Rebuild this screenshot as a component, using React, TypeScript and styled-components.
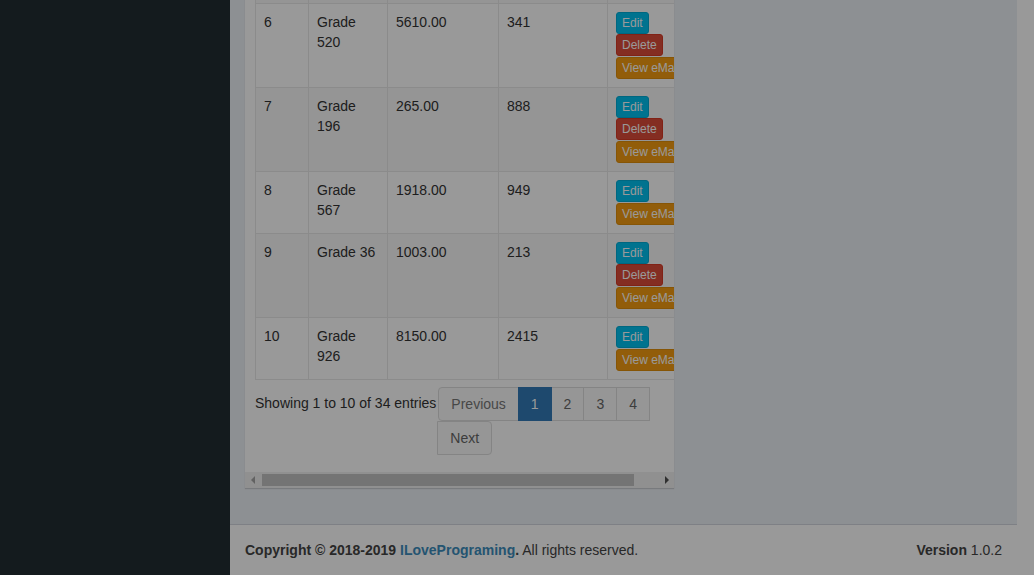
import React from 'react';
import styled, { createGlobalStyle, css } from 'styled-components';

const GlobalStyle = createGlobalStyle`
	html, body {
		margin: 0;
		height: 100%;
	}
	body {
		padding-right: 17px;
		background: #fff;
		font-family: 'Liberation Sans', Arial, Helvetica, sans-serif;
		font-size: 14px;
		line-height: 20px;
		color: #333;
		overflow: hidden;
	}
`;

type Grade = {
	id: number;
	name: string;
	fee: string;
	students: number;
	canDelete: boolean;
};

// row 5 sits above the fold, the page is scrolled down to row 6
const grades: Grade[] = [
	{ id: 5, name: 'Grade 412', fee: '4400.00', students: 510, canDelete: true },
	{ id: 6, name: 'Grade 520', fee: '5610.00', students: 341, canDelete: true },
	{ id: 7, name: 'Grade 196', fee: '265.00', students: 888, canDelete: true },
	{ id: 8, name: 'Grade 567', fee: '1918.00', students: 949, canDelete: false },
	{ id: 9, name: 'Grade 36', fee: '1003.00', students: 213, canDelete: true },
	{ id: 10, name: 'Grade 926', fee: '8150.00', students: 2415, canDelete: false },
];

export default function App() {
	return (
		<>
			<GlobalStyle />
			<Wrapper>
				<Sidebar />
				<Main>
					<Content>
						<Box>
							<BoxBody>
								<Table>
									<colgroup>
										<col style={{ width: 53 }} />
										<col style={{ width: 79 }} />
										<col style={{ width: 111 }} />
										<col style={{ width: 109 }} />
										<col style={{ width: 83 }} />
									</colgroup>
									<tbody>
										{grades.map((g) => (
											<Row key={g.id} $striped={g.id % 2 === 1}>
												<Cell>{g.id}</Cell>
												<Cell>{g.name}</Cell>
												<Cell>{g.fee}</Cell>
												<Cell>{g.students}</Cell>
												<Cell>
													<Actions>
														<Btn $variant='info'>Edit</Btn>
														{g.canDelete && <Btn $variant='danger'>Delete</Btn>}
														<ViewBtn $variant='warning'>View eMail</ViewBtn>
													</Actions>
												</Cell>
											</Row>
										))}
									</tbody>
								</Table>
								<Footerbar>
									<Info>Showing 1 to 10 of 34 entries</Info>
									<Pager>
										<PageLink $disabled>Previous</PageLink>
										<PageLink $active>1</PageLink>
										<PageLink>2</PageLink>
										<PageLink>3</PageLink>
										<PageLink>4</PageLink>
										<PageLink $last>Next</PageLink>
									</Pager>
								</Footerbar>
							</BoxBody>
							<ScrollBar>
								<ArrowBox>
									<ArrowLeft />
								</ArrowBox>
								<Track>
									<Thumb />
								</Track>
								<ArrowBox>
									<ArrowRight />
								</ArrowBox>
							</ScrollBar>
						</Box>
					</Content>
					<MainFooter>
						<span>
							<b>Copyright © 2018-2019 </b>
							<FooterLink href='#'>ILovePrograming</FooterLink>
							<b>.</b> All rights reserved.
						</span>
						<span>
							<b>Version</b> 1.0.2
						</span>
					</MainFooter>
				</Main>
			</Wrapper>
			<Backdrop />
		</>
	);
}

const Wrapper = styled.div`
	display: flex;
	height: 100vh;
`;

const Sidebar = styled.aside`
	width: 230px;
	flex-shrink: 0;
	background: #222d32;
`;

const Main = styled.div`
	flex: 1;
	display: flex;
	flex-direction: column;
	min-width: 0;
`;

const Content = styled.section`
	flex: 1;
	background: #ecf0f5;
	padding: 0 15px;
	overflow: hidden;
`;

const Box = styled.div`
	width: 429px;
	margin-top: -81px;
	background: #fff;
	box-shadow: 0 1px 1px rgba(0, 0, 0, 0.15);
`;

const BoxBody = styled.div`
	padding: 0 10px 17px;
	overflow: hidden;
`;

const Table = styled.table`
	width: 435px;
	table-layout: fixed;
	border-collapse: separate;
	border-spacing: 0;
	border-right: 1px solid #e8e8e8;
	border-bottom: 1px solid #e8e8e8;
`;

const Row = styled.tr<{ $striped?: boolean }>`
	background: ${(p) => (p.$striped ? '#f9f9f9' : '#fff')};
`;

const Cell = styled.td`
	padding: 8px;
	vertical-align: top;
	border-top: 1px solid #e8e8e8;
	border-left: 1px solid #e8e8e8;
	white-space: normal;
`;

const Actions = styled.div`
	display: flex;
	flex-direction: column;
	align-items: flex-start;
`;

const variants = {
	info: css`
		background: #00c0ef;
		border-color: #00acd6;
	`,
	danger: css`
		background: #dd4b39;
		border-color: #d73925;
	`,
	warning: css`
		background: #f39c12;
		border-color: #e08e0b;
	`,
};

const Btn = styled.span<{ $variant: keyof typeof variants }>`
	display: inline-block;
	padding: 1px 5px;
	font-size: 12px;
	line-height: 18px;
	color: #fff;
	border: 1px solid;
	border-radius: 3px;
	white-space: nowrap;
	${(p) => variants[p.$variant]}
`;

const ViewBtn = styled(Btn)`
	margin-top: 1px;
`;

const Footerbar = styled.div`
	display: flex;
	align-items: flex-start;
	margin-top: 7px;
`;

const Info = styled.div`
	padding-top: 6px;
	white-space: nowrap;
`;

const Pager = styled.div`
	flex: 1;
	display: flex;
	flex-wrap: wrap;
	margin-left: 2px;
`;

const PageLink = styled.a<{ $active?: boolean; $disabled?: boolean; $last?: boolean }>`
	display: block;
	padding: 6px 12px;
	line-height: 20px;
	border: 1px solid #ddd;
	background: #fafafa;
	color: #666;
	margin-left: -1px;
	&:first-child {
		margin-left: 0;
		border-radius: 4px 0 0 4px;
	}
	${(p) =>
		p.$disabled &&
		css`
			color: #777;
		`}
	${(p) =>
		p.$active &&
		css`
			position: relative;
			z-index: 1;
			background: #337ab7;
			border-color: #337ab7;
			color: #fff;
		`}
	${(p) =>
		p.$last &&
		css`
			border-radius: 0 4px 4px 0;
		`}
`;

const ScrollBar = styled.div`
	display: flex;
	align-items: center;
	height: 16px;
	background: #f1f1f1;
`;

const ArrowBox = styled.div`
	width: 15px;
	height: 16px;
	display: flex;
	align-items: center;
	justify-content: center;
`;

const ArrowLeft = styled.div`
	width: 0;
	height: 0;
	border-top: 4px solid transparent;
	border-bottom: 4px solid transparent;
	border-right: 4px solid #a3a3a3;
`;

const ArrowRight = styled.div`
	width: 0;
	height: 0;
	border-top: 4px solid transparent;
	border-bottom: 4px solid transparent;
	border-left: 4px solid #505050;
`;

const Track = styled.div`
	flex: 1;
	height: 16px;
	display: flex;
	align-items: center;
	padding-left: 2px;
`;

const Thumb = styled.div`
	width: 372px;
	height: 12px;
	background: #c1c1c1;
`;

const MainFooter = styled.footer`
	display: flex;
	justify-content: space-between;
	padding: 15px;
	background: #fff;
	border-top: 1px solid #d2d6de;
	color: #444;
`;

const FooterLink = styled.a`
	color: #3c8dbc;
	font-weight: bold;
	text-decoration: none;
`;

const Backdrop = styled.div`
	position: fixed;
	inset: 0;
	background: rgba(0, 0, 0, 0.4);
	z-index: 1040;
`;
